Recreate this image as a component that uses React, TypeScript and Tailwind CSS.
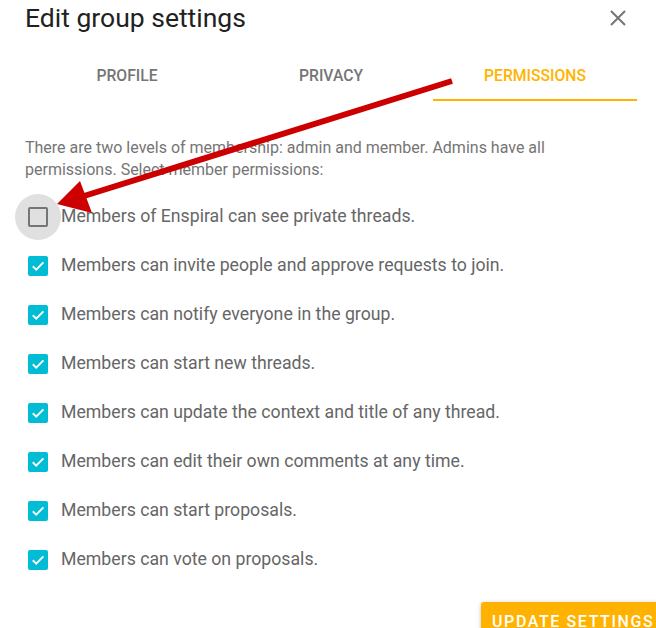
import React from 'react';

const permissions = [
  { label: 'Members of Enspiral can see private threads.', checked: false },
  { label: 'Members can invite people and approve requests to join.', checked: true },
  { label: 'Members can notify everyone in the group.', checked: true },
  { label: 'Members can start new threads.', checked: true },
  { label: 'Members can update the context and title of any thread.', checked: true },
  { label: 'Members can edit their own comments at any time.', checked: true },
  { label: 'Members can start proposals.', checked: true },
  { label: 'Members can vote on proposals.', checked: true },
];

function Checkbox({ checked, focused }: { checked: boolean; focused?: boolean }) {
  return (
    <div
      className={`w-[46px] h-[46px] rounded-full flex items-center justify-center shrink-0 ${
        focused ? 'bg-[#e0e0e0]' : ''
      }`}
    >
      {checked ? (
        <div className="w-5 h-5 rounded-[2px] bg-[#00bcd4] flex items-center justify-center">
          <svg width="20" height="20" viewBox="0 0 20 20" fill="none">
            <path d="M4.8 10.2l3.4 3.4L15.4 6.4" stroke="#fff" strokeWidth="2" />
          </svg>
        </div>
      ) : (
        <div className="w-5 h-5 rounded-[2px] border-2 border-[#757575]" />
      )}
    </div>
  );
}

export default function App() {
  return (
    <div
      className="relative w-[656px] h-[628px] overflow-hidden bg-white"
      style={{ fontFamily: 'Roboto, "Noto Sans", sans-serif' }}
    >
      {/* Header */}
      <div className="flex items-center justify-between h-[35px] pl-[25px] pr-[30px]">
        <h1 className="text-[26.5px] leading-[32px] text-[#212121]">Edit group settings</h1>
        <svg width="16" height="16" viewBox="0 0 16 16">
          <path d="M1 1l14 14M15 1L1 15" stroke="#757575" strokeWidth="2" />
        </svg>
      </div>

      {/* Tabs */}
      <div className="flex ml-[25px] mr-[19px] mt-[19px]">
        {['Profile', 'Privacy', 'Permissions'].map((t, i) => (
          <div
            key={t}
            className={`flex-1 h-[47px] pb-[2px] flex items-center justify-center uppercase text-[15.7px] font-medium border-b-2 ${
              i === 2 ? 'text-[#ffb300] border-[#ffb300]' : 'text-[#757575] border-transparent'
            }`}
          >
            {t}
          </div>
        ))}
      </div>

      {/* Description */}
      <p className="mt-[36px] pl-[25px] pr-[90px] text-[16px] leading-[22px] text-[#757575]">
        There are two levels of membership: admin and member. Admins have all permissions. Select member
        permissions:
      </p>

      {/* Permission list */}
      <div className="mt-[11px] flex flex-col">
        {permissions.map((p, i) => (
          <div key={p.label} className="flex items-center h-[49px] pl-[15px]">
            <Checkbox checked={p.checked} focused={i === 0} />
            <span className="text-[17.7px] text-[#666666]">{p.label}</span>
          </div>
        ))}
      </div>

      {/* Footer */}
      <div className="flex justify-end w-[690px] mt-[18px]">
        <button className="w-[209px] h-[40px] rounded-[3px] bg-[#ffb300] text-white text-[16px] font-medium tracking-[1.6px] uppercase text-left pl-[11px] shadow-[0_1px_4px_rgba(0,0,0,0.25)]">
          Update settings
        </button>
      </div>

      {/* Annotation arrow */}
      <svg className="absolute inset-0 pointer-events-none" width="656" height="628">
        <line x1="452" y1="81" x2="84" y2="196" stroke="#cc0000" strokeWidth="6" />
        <polygon points="57,204 80,181 92,213" fill="#cc0000" />
      </svg>
    </div>
  );
}
